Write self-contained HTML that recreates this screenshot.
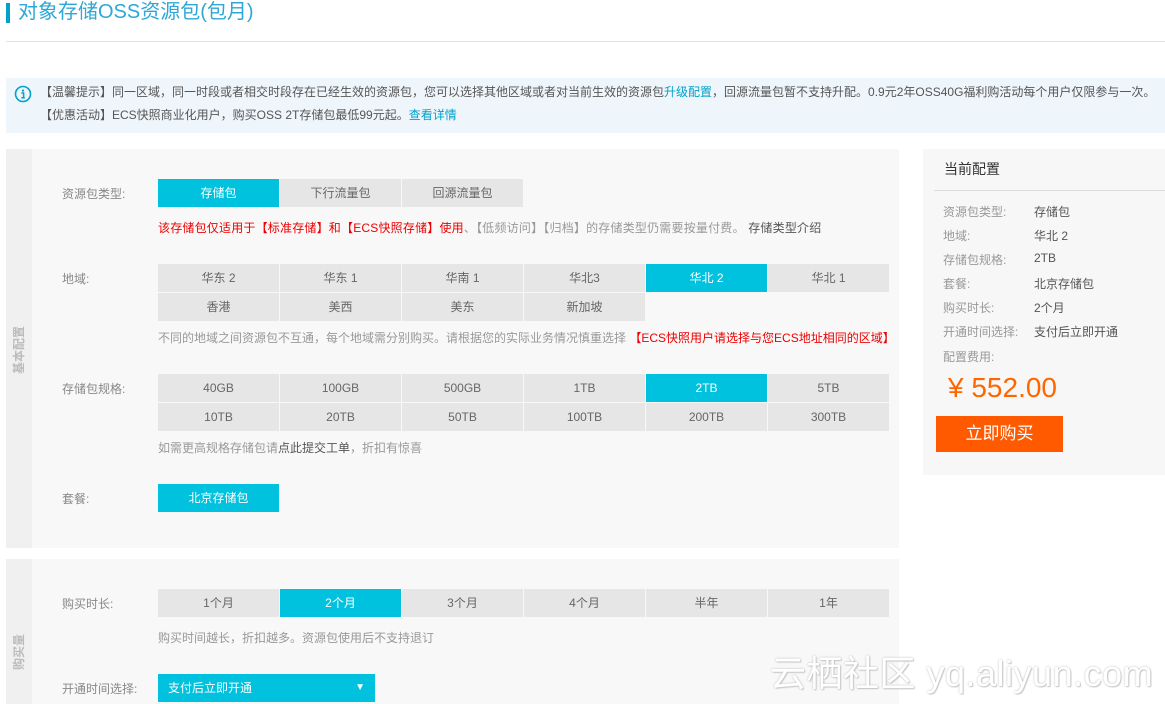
<!DOCTYPE html>
<html><head><meta charset="utf-8"><style>
*{margin:0;padding:0;box-sizing:border-box}
body{width:1165px;height:704px;overflow:hidden;background:#fff;font-family:"Liberation Sans","Noto Sans CJK SC",sans-serif;font-size:12px;color:#666;position:relative}
.a{position:absolute;white-space:nowrap}
.b{position:absolute;height:28px;width:121px;background:#e6e6e6;color:#666;text-align:center;line-height:28px;font-size:12px}
.on{background:#00c1de;color:#fff}
.lbl{position:absolute;left:62px;color:#888;font-size:12px}
.r{position:absolute;left:943px;color:#999;font-size:12px}
.v{position:absolute;left:1034px;color:#555;font-size:12px}
.vt{position:absolute;transform:rotate(-90deg);transform-origin:center;color:#bbb;font-size:12px;font-weight:bold;width:60px;text-align:center;line-height:14px}
</style></head><body>
<div class="a" style="left:6px;top:3px;width:4px;height:20px;background:#00a2ca"></div>
<div class="a" style="left:18px;top:0px;font-size:20px;color:#2ea7d6;line-height:24px">对象存储OSS资源包(包月)</div>
<div class="a" style="left:6px;top:41px;width:1159px;height:1px;background:#e3e3e3"></div>

<div class="a" style="left:6px;top:78px;width:1159px;height:55px;background:#eef5fb"></div>
<svg class="a" style="left:14px;top:85px" width="18" height="18" viewBox="0 0 18 18"><circle cx="9" cy="9" r="7.5" fill="none" stroke="#00a2ca" stroke-width="1.6"/><circle cx="9" cy="5.6" r="1.1" fill="#00a2ca"/><path d="M7.3 8h2.3v4.6M7.3 12.8h3.6" stroke="#00a2ca" stroke-width="1.5" fill="none"/></svg>
<div class="a" style="left:40px;top:84px;color:#555;line-height:16px">【温馨提示】同一区域，同一时段或者相交时段存在已经生效的资源包，您可以选择其他区域或者对当前生效的资源包<span style="color:#00a2ca">升级配置</span>，回源流量包暂不支持升配。0.9元2年OSS40G福利购活动每个用户仅限参与一次。</div>
<div class="a" style="left:40px;top:107px;color:#555;line-height:16px">【优惠活动】ECS快照商业化用户，购买OSS 2T存储包最低99元起。<span style="color:#00a2ca">查看详情</span></div>

<div class="a" style="left:6px;top:149px;width:893px;height:399px;background:#f8f8f8"></div>
<div class="a" style="left:6px;top:149px;width:26px;height:399px;background:#f0f0f0"></div>
<div class="vt" style="left:-11px;top:343px">基本配置</div>
<div class="a" style="left:6px;top:559px;width:893px;height:145px;background:#f8f8f8"></div>
<div class="a" style="left:6px;top:559px;width:26px;height:145px;background:#f0f0f0"></div>
<div class="vt" style="left:-11px;top:645px">购买量</div>

<div class="lbl" style="top:185px">资源包类型:</div>
<div class="b on" style="left:158px;top:179px">存储包</div>
<div class="b" style="left:280px;top:179px">下行流量包</div>
<div class="b" style="left:402px;top:179px">回源流量包</div>
<div class="a" style="left:158px;top:219px;color:#e00;letter-spacing:0.2px">该存储包仅适用于【标准存储】和【ECS快照存储】使用<span style="color:#999">、【低频访问】【归档】的存储类型仍需要按量付费。</span><span style="color:#555"> 存储类型介绍</span></div>

<div class="lbl" style="top:270px">地域:</div>
<div class="b" style="left:158px;top:264px">华东 2</div>
<div class="b" style="left:280px;top:264px">华东 1</div>
<div class="b" style="left:402px;top:264px">华南 1</div>
<div class="b" style="left:524px;top:264px">华北3</div>
<div class="b on" style="left:646px;top:264px">华北 2</div>
<div class="b" style="left:768px;top:264px">华北 1</div>
<div class="b" style="left:158px;top:293px">香港</div>
<div class="b" style="left:280px;top:293px">美西</div>
<div class="b" style="left:402px;top:293px">美东</div>
<div class="b" style="left:524px;top:293px">新加坡</div>
<div class="a" style="left:158px;top:329px;color:#999">不同的地域之间资源包不互通，每个地域需分别购买。请根据您的实际业务情况慎重选择 <span style="color:#e00">【ECS快照用户请选择与您ECS地址相同的区域】</span></div>

<div class="lbl" style="top:380px">存储包规格:</div>
<div class="b" style="left:158px;top:374px">40GB</div>
<div class="b" style="left:280px;top:374px">100GB</div>
<div class="b" style="left:402px;top:374px">500GB</div>
<div class="b" style="left:524px;top:374px">1TB</div>
<div class="b on" style="left:646px;top:374px">2TB</div>
<div class="b" style="left:768px;top:374px">5TB</div>
<div class="b" style="left:158px;top:403px">10TB</div>
<div class="b" style="left:280px;top:403px">20TB</div>
<div class="b" style="left:402px;top:403px">50TB</div>
<div class="b" style="left:524px;top:403px">100TB</div>
<div class="b" style="left:646px;top:403px">200TB</div>
<div class="b" style="left:768px;top:403px">300TB</div>
<div class="a" style="left:158px;top:439px;color:#999">如需更高规格存储包请<span style="color:#555">点此提交工单</span>，折扣有惊喜</div>

<div class="lbl" style="top:490px">套餐:</div>
<div class="b on" style="left:158px;top:484px">北京存储包</div>

<div class="lbl" style="top:595px">购买时长:</div>
<div class="b" style="left:158px;top:589px">1个月</div>
<div class="b on" style="left:280px;top:589px">2个月</div>
<div class="b" style="left:402px;top:589px">3个月</div>
<div class="b" style="left:524px;top:589px">4个月</div>
<div class="b" style="left:646px;top:589px">半年</div>
<div class="b" style="left:768px;top:589px">1年</div>
<div class="a" style="left:158px;top:629px;color:#999">购买时间越长，折扣越多。资源包使用后不支持退订</div>

<div class="lbl" style="top:680px">开通时间选择:</div>
<div class="a" style="left:158px;top:674px;width:217px;height:28px;background:#00c1de;color:#fff;line-height:28px;padding-left:10px">支付后立即开通<span style="position:absolute;right:10px;top:0;font-size:10px">▼</span></div>

<div class="a" style="left:923px;top:149px;width:242px;height:326px;background:#f7f7f7"></div>
<div class="a" style="left:944px;top:159px;font-size:14px;color:#333;line-height:20px">当前配置</div>
<div class="a" style="left:934px;top:190px;width:231px;height:1px;background:#ddd"></div>
<div class="r" style="top:203px">资源包类型:</div><div class="v" style="top:203px">存储包</div>
<div class="r" style="top:227px">地域:</div><div class="v" style="top:227px">华北 2</div>
<div class="r" style="top:251px">存储包规格:</div><div class="v" style="top:251px">2TB</div>
<div class="r" style="top:275px">套餐:</div><div class="v" style="top:275px">北京存储包</div>
<div class="r" style="top:299px">购买时长:</div><div class="v" style="top:299px">2个月</div>
<div class="r" style="top:323px">开通时间选择:</div><div class="v" style="top:323px">支付后立即开通</div>
<div class="r" style="top:348px">配置费用:</div>
<div class="a" style="left:948px;top:371px;font-size:28px;color:#f60;line-height:34px">¥ 552.00</div>
<div class="a" style="left:936px;top:416px;width:127px;height:36px;background:#ff5a00;color:#fff;font-size:17px;line-height:36px;text-align:center">立即购买</div>

<div class="a" style="left:770px;top:652px;font-size:36px;letter-spacing:0.5px;color:#fff;text-shadow:0 0 2px #bbb,1px 1px 1px #ccc;line-height:44px">云栖社区 yq.aliyun.com</div>
</body></html>
